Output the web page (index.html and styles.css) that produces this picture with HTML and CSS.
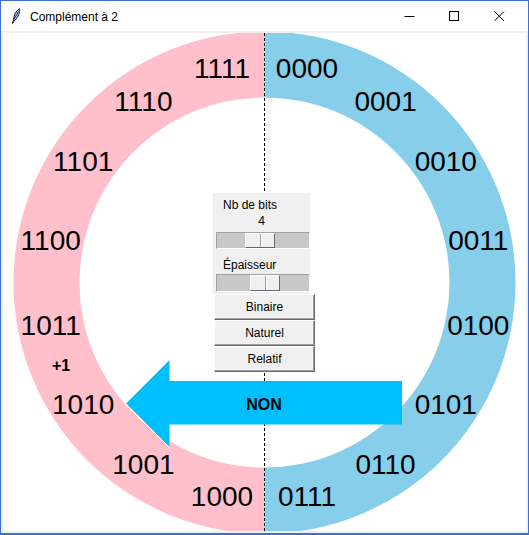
FILE: index.html
```html
<!DOCTYPE html>
<html lang="fr">
<head>
<meta charset="utf-8">
<title>Complément à 2</title>
<link rel="stylesheet" href="styles.css">
</head>
<body>
<div class="window">
  <div class="titlebar">
    <svg class="app-icon" width="10" height="16" viewBox="0 0 10 16">
      <path d="M1.5 15.5 L2.6 11.5 C2.8 7 5 2.5 8.6 0.8 C9 4.5 7.6 9 3.6 12.4 Z" fill="#a9cdf2" stroke="#10142e" stroke-width="1"/>
      <path d="M2.6 12.2 L7.4 3.6" stroke="#10142e" stroke-width="0.8"/>
    </svg>
    <span class="title">Complément à 2</span>
    <div class="caption-buttons">
      <div class="cap-btn">
        <svg width="11" height="11" viewBox="0 0 11 11"><path d="M0.5 5.5 H10.5" stroke="#000" stroke-width="1"/></svg>
      </div>
      <div class="cap-btn">
        <svg width="11" height="11" viewBox="0 0 11 11"><rect x="0.5" y="0.5" width="9" height="9" fill="none" stroke="#000" stroke-width="1"/></svg>
      </div>
      <div class="cap-btn">
        <svg width="11" height="11" viewBox="0 0 11 11"><path d="M0.5 0.5 L10 10 M10 0.5 L0.5 10" stroke="#000" stroke-width="1"/></svg>
      </div>
    </div>
  </div>
  <div class="client">
    <div class="canvas">
      <svg class="diagram" width="523" height="498" viewBox="3 33 523 498">
        <path d="M264.5 31.5 A251 251 0 0 0 264.5 533.5 L264.5 467.5 A185 185 0 0 1 264.5 97.5 Z" fill="#ffc0cb"/>
        <path d="M264.5 31.5 A251 251 0 0 1 264.5 533.5 L264.5 467.5 A185 185 0 0 0 264.5 97.5 Z" fill="#87ceeb"/>
        <line x1="264.5" y1="33" x2="264.5" y2="531" stroke="#000" stroke-width="1" stroke-dasharray="3 2"/>
        <polygon points="126,403.5 169.5,360 169.5,381 402,381 402,424.5 169.5,424.5 169.5,447" fill="#00bfff"/>
        <line x1="126.5" y1="404.5" x2="169.5" y2="447.5" stroke="#fff" stroke-width="1"/>
        <g class="labels">
          <text x="307" y="78">0000</text>
          <text x="385.6" y="111">0001</text>
          <text x="445.8" y="171">0010</text>
          <text x="478.3" y="250">0011</text>
          <text x="478.3" y="335">0100</text>
          <text x="445.8" y="414">0101</text>
          <text x="385.6" y="474">0110</text>
          <text x="307" y="506">0111</text>
          <text x="222" y="506">1000</text>
          <text x="143.4" y="474">1001</text>
          <text x="83.2" y="414">1010</text>
          <text x="50.7" y="335">1011</text>
          <text x="50.7" y="250">1100</text>
          <text x="83.2" y="171">1101</text>
          <text x="143.4" y="111">1110</text>
          <text x="222" y="78">1111</text>
        </g>
        <text class="plus" x="61" y="371">+1</text>
        <text class="non" x="264" y="410">NON</text>
      </svg>
      <div class="panel">
        <div class="settings">
          <div class="lbl">Nb de bits</div>
          <div class="value">4</div>
          <div class="trough"><div class="thumb thumb-bits"></div></div>
          <div class="lbl lbl-2">Épaisseur</div>
          <div class="trough"><div class="thumb thumb-ep"></div></div>
        </div>
        <div class="btn">Binaire</div>
        <div class="btn">Naturel</div>
        <div class="btn">Relatif</div>
      </div>
    </div>
  </div>
</div>
</body>
</html>
```
FILE: styles.css
```css
* { box-sizing: border-box; }
html, body {
  margin: 0;
  padding: 0;
  width: 529px;
  height: 535px;
  overflow: hidden;
  background: #ffffff;
}
.window {
  width: 529px;
  height: 535px;
  border: 1px solid #3a6fd6;
  border-bottom-width: 2px;
  display: flex;
  flex-direction: column;
  background: #ffffff;
  font-family: "Liberation Sans", Arial, sans-serif;
}
.titlebar {
  height: 30px;
  flex: none;
  display: flex;
  align-items: center;
  background: #ffffff;
}
.app-icon {
  margin-left: 10px;
  margin-top: -1px;
  display: block;
}
.title {
  margin-left: 9px;
  font-size: 12px;
  color: #000;
  margin-top: 1px;
}
.caption-buttons {
  margin-left: auto;
  margin-right: 6px;
  display: flex;
  height: 30px;
}
.cap-btn {
  width: 45px;
  height: 30px;
  display: flex;
  align-items: center;
  justify-content: center;
}
.cap-btn svg { display: block; }
.client {
  flex: 1;
  background: #f0f0f0;
  padding: 2px;
}
.canvas {
  position: relative;
  width: 523px;
  height: 498px;
  background: #ffffff;
  overflow: hidden;
}
.diagram { display: block; }
.labels text {
  font-family: "Liberation Sans", Arial, sans-serif;
  font-size: 28px;
  fill: #000;
  text-anchor: middle;
}
.plus {
  font-family: "Liberation Sans", Arial, sans-serif;
  font-size: 16px;
  font-weight: bold;
  text-anchor: middle;
}
.non {
  font-family: "Liberation Sans", Arial, sans-serif;
  font-size: 16px;
  font-weight: bold;
  text-anchor: middle;
}
.panel {
  position: absolute;
  left: 210px;
  top: 160px;
  display: flex;
  flex-direction: column;
  align-items: flex-start;
}
.settings {
  width: 97px;
  height: 101px;
  background: #f0f0f0;
  padding: 5px 0 0 3px;
  font-size: 12px;
  color: #000;
}
.lbl {
  padding-left: 7px;
  line-height: 14px;
}
.lbl-2 { margin-top: 9px; }
.value {
  text-align: center;
  line-height: 14px;
  margin-top: 2px;
  margin-left: -3px;
}
.trough {
  position: relative;
  margin-top: 4px;
  width: 94px;
  height: 17px;
  background: #c8c8c8;
  border-top: 1px solid #a0a0a0;
  border-left: 1px solid #a0a0a0;
  border-right: 1px solid #ffffff;
  border-bottom: 1px solid #ffffff;
}
.lbl-2 + .trough { margin-top: 2px; height: 18px; }
.thumb {
  position: absolute;
  top: 0;
  height: 100%;
  width: 30px;
  background: linear-gradient(to right, transparent 14px, #a0a0a0 14px, #a0a0a0 15px, #ffffff 15px, #ffffff 16px, transparent 16px), #f0f0f0;
  border-top: 1px solid #ffffff;
  border-left: 1px solid #ffffff;
  border-right: 1px solid #696969;
  border-bottom: 1px solid #696969;
}
.thumb-bits { left: 28px; }
.thumb-ep { left: 33px; }
.btn {
  width: 101px;
  height: 26px;
  margin-left: 1px;
  background: #f0f0f0;
  border-top: 1px solid #ffffff;
  border-left: 1px solid #ffffff;
  border-right: 1px solid #696969;
  border-bottom: 1px solid #696969;
  box-shadow: inset -1px -1px 0 #a0a0a0;
  display: flex;
  align-items: center;
  justify-content: center;
  font-size: 12px;
  color: #000;
}
.btn + .btn { margin-top: 0; }
```
